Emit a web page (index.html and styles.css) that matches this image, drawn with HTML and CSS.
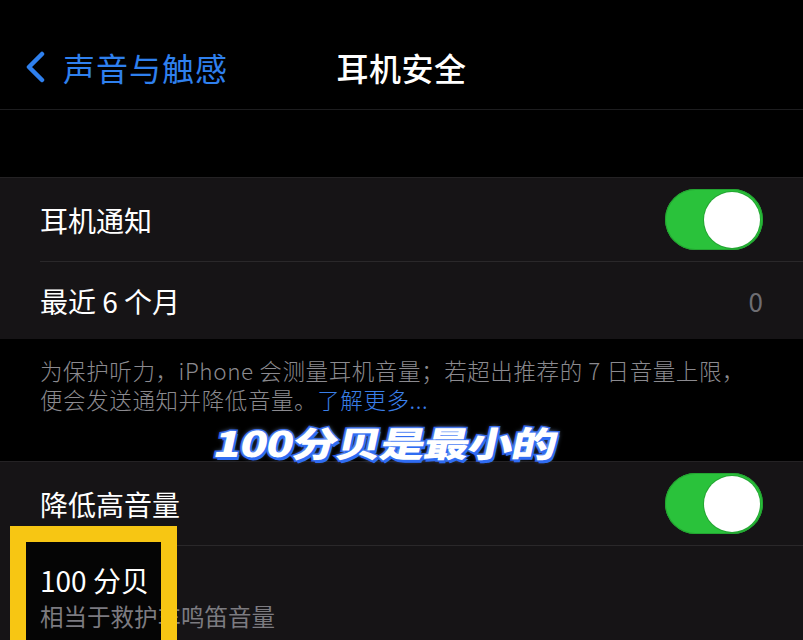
FILE: index.html
```html
<!DOCTYPE html>
<html lang="zh-CN">
<head>
    <meta charset="UTF-8">
    <title>耳机安全</title>
    <link rel="stylesheet" href="styles.css">
</head>
<body>
    <div class="screen">
        <header class="nav">
            <a class="nav-back" href="#">
                <svg class="nav-chevron" viewBox="0 0 20 32" width="20" height="32">
                    <path d="M17 3 L4 16 L17 29" fill="none" stroke="currentColor" stroke-width="4.5" stroke-linecap="round" stroke-linejoin="round"/>
                </svg>
                <span>声音与触感</span>
            </a>
            <h1 class="nav-title">耳机安全</h1>
            <div></div>
        </header>

        <section class="group group-top">
            <div class="row">
                <div class="row-inner">
                    <span class="row-label">耳机通知</span>
                    <span class="switch is-on"><span class="switch-knob"></span></span>
                </div>
            </div>
            <div class="row">
                <div class="row-inner">
                    <span class="row-label">最近 6 个月</span>
                    <span class="row-value">0</span>
                </div>
            </div>
        </section>

        <p class="group-footer">为保护听力，iPhone 会测量耳机音量；若超出推荐的 7 日音量上限，<br>便会发送通知并降低音量。<a href="#">了解更多...</a></p>

        <section class="group">
            <div class="row">
                <div class="row-inner">
                    <span class="row-label">降低高音量</span>
                    <span class="switch is-on"><span class="switch-knob"></span></span>
                </div>
            </div>
            <div class="row row-tall">
                <div class="mark-fill"></div>
                <div class="row-inner">
                    <div class="row-text">
                        <span class="row-label">100 分贝</span>
                        <span class="row-sub">相当于救护车鸣笛音量</span>
                    </div>
                </div>
                <div class="mark"></div>
            </div>
        </section>

        <div class="caption">100分贝是最小的</div>
    </div>
</body>
</html>
```

FILE: styles.css
```css
/* Settings screen, dark mode */
html, body {
    margin: 0;
    padding: 0;
    background: #000;
    overflow: hidden;
}
body {
    font-family: "Noto Sans CJK SC", "Noto Sans", sans-serif;
    color: #fff;
}
a {
    text-decoration: none;
}
.screen {
    position: relative;
    width: 803px;
    height: 640px;
    overflow: hidden;
    background: #000;
}

/* Navigation bar */
.nav {
    height: 110px;
    display: grid;
    grid-template-columns: 1fr auto 1fr;
    align-items: center;
    border-bottom: 1px solid #1d1d1f;
    box-sizing: border-box;
    padding-top: 24px;
}
.nav-back {
    display: flex;
    align-items: center;
    gap: 18px;
    padding-left: 25px;
    color: #2f80ee;
    font-size: 32px;
    letter-spacing: 1px;
}
.nav-title {
    margin: 0;
    font-size: 32px;
    font-weight: 500;
    letter-spacing: 0.5px;
}

/* Grouped list */
.group {
    background: #161416;
    border-top: 1px solid #242224;
}
.group-top {
    margin-top: 67px;
}
.row {
    position: relative;
    padding-left: 40px;
}
.row-inner {
    height: 83px;
    display: flex;
    align-items: center;
    justify-content: space-between;
    padding-right: 40px;
    box-sizing: border-box;
}
.group-top .row + .row .row-inner {
    height: 78px;
}
.row + .row .row-inner {
    border-top: 1px solid #2a282a;
}
.row-label {
    font-size: 28px;
}
.row-value {
    font-size: 26px;
    color: #6e6d72;
}
.row-tall .row-inner {
    height: 110px;
    align-items: flex-start;
}
.row-text {
    display: flex;
    flex-direction: column;
    padding-top: 14px;
    position: relative;
    z-index: 1;
}
.row-sub {
    font-size: 23.5px;
    line-height: 32px;
    color: #7c7b80;
}

/* Toggle switch */
.switch {
    width: 98px;
    height: 61px;
    border-radius: 31px;
    background: #3a3a3c;
    display: flex;
    align-items: center;
    padding: 0 3px;
    box-sizing: border-box;
}
.switch.is-on {
    background: #2ac23b;
    justify-content: flex-end;
    box-shadow: inset 0 0 0 1px #23a431;
}
.switch-knob {
    width: 56px;
    height: 56px;
    border-radius: 50%;
    background: #fff;
    box-shadow: 0 0 0 1px rgba(0, 0, 0, 0.15);
}

/* Group footer note */
.group-footer {
    margin: 0;
    height: 122px;
    box-sizing: border-box;
    padding: 17px 40px 0;
    font-size: 22.5px;
    line-height: 29px;
    letter-spacing: 0.6px;
    font-weight: 300;
    color: #8b8a8f;
    white-space: nowrap;
}
.group-footer a {
    color: #3a7fe8;
}

/* Yellow highlight frame */
.mark-fill {
    position: absolute;
    left: 10px;
    top: -19px;
    width: 167px;
    height: 140px;
    background: #050505;
}
.mark {
    position: absolute;
    left: 10px;
    top: -19px;
    width: 167px;
    height: 140px;
    box-sizing: border-box;
    border: 16px solid #f7c613;
    z-index: 2;
}

/* Subtitle caption */
.caption {
    position: absolute;
    left: 215px;
    top: 416px;
    font-size: 35px;
    font-weight: 900;
    letter-spacing: -1px;
    color: #fff;
    -webkit-text-stroke: 3px #1f55e0;
    paint-order: stroke fill;
    text-shadow: 2px 3px 0 #2f6cf2, 0 0 5px #8db6ff;
    transform: skewX(-12deg) scaleX(1.29);
    transform-origin: left center;
    z-index: 3;
}
```
